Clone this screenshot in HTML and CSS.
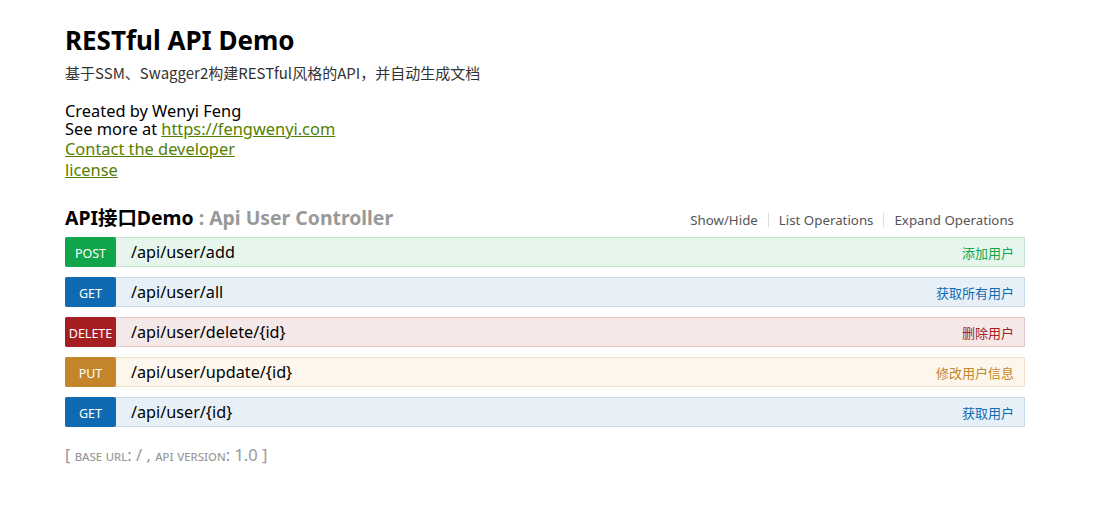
FILE: index.html
```html
<!DOCTYPE html>
<html>
<head>
<meta charset="utf-8">
<link rel="stylesheet" href="styles.css">
</head>
<body>
<div class="wrap">
  <div class="info">
    <div class="info-title">RESTful API Demo</div>
    <div class="info-desc">基于SSM、Swagger2构建RESTful风格的API，并自动生成文档</div>
    <div class="info-by">Created by Wenyi Feng</div>
    <div class="info-more">See more at <a href="#">https://fengwenyi.com</a></div>
    <div class="info-link"><a href="#">Contact the developer</a></div>
    <div class="info-link"><a href="#">license</a></div>
  </div>

  <div class="resource">
    <div class="res-head">
      <h2 class="res-title">API接口Demo<span class="res-sub"> : Api User Controller</span></h2>
      <ul class="options">
        <li>Show/Hide</li>
        <li>List Operations</li>
        <li>Expand Operations</li>
      </ul>
    </div>
    <div class="op post">
      <span class="method">POST</span>
      <span class="path">/api/user/add</span>
      <span class="summary">添加用户</span>
    </div>
    <div class="op get">
      <span class="method">GET</span>
      <span class="path">/api/user/all</span>
      <span class="summary">获取所有用户</span>
    </div>
    <div class="op delete">
      <span class="method">DELETE</span>
      <span class="path">/api/user/delete/{id}</span>
      <span class="summary">删除用户</span>
    </div>
    <div class="op put">
      <span class="method">PUT</span>
      <span class="path">/api/user/update/{id}</span>
      <span class="summary">修改用户信息</span>
    </div>
    <div class="op get">
      <span class="method">GET</span>
      <span class="path">/api/user/{id}</span>
      <span class="summary">获取用户</span>
    </div>
  </div>

  <div class="footer">[ <span class="sc">base url</span>: / , <span class="sc">api version</span>: 1.0 ]</div>
</div>
</body>
</html>
```
FILE: styles.css
```css
* { box-sizing: border-box; }
body {
  margin: 0;
  background: #fff;
  font-family: "Noto Sans", "Noto Sans CJK SC", sans-serif;
  color: #000;
}
.wrap {
  width: 960px;
  margin-left: 65px;
  padding-top: 22px;
}
.info-title {
  font-size: 26px;
  font-weight: bold;
  line-height: 36px;
}
.info-desc {
  font-size: 15px;
  color: #333;
  line-height: 20px;
  margin-top: 5px;
  font-family: "Noto Sans CJK SC", sans-serif;
}
.info-by {
  margin-top: 19px;
  font-size: 16.4px;
  line-height: 18px;
}
.info-more {
  font-size: 16.4px;
  line-height: 18px;
}
.info-link {
  font-size: 16.4px;
  line-height: 21px;
}
a { color: #547f00; text-decoration: underline; }

.resource { margin-top: 23px; }
.res-head {
  display: flex;
  justify-content: space-between;
  align-items: flex-end;
  height: 28px;
  margin-bottom: 6px;
}
.res-title {
  margin: 0;
  font-size: 19.4px;
  font-weight: bold;
  line-height: 26px;
  font-family: "Noto Sans", "Noto Sans CJK SC", sans-serif;
}
.res-sub { color: #999; }
.options {
  list-style: none;
  display: flex;
  margin: 0;
  padding: 0 0 4px 0;
  font-size: 13.3px;
  color: #555;
  line-height: 14px;
}
.options li {
  padding: 0 10px;
  border-right: 1px solid #ddd;
}
.options li:last-child { border-right: none; padding-right: 11px; }

.op {
  display: flex;
  align-items: center;
  height: 30px;
  border: 1px solid;
  margin-bottom: 10px;
}
.method {
  width: 51px;
  align-self: stretch;
  margin: -1px 0 -1px -1px;
  border-radius: 2px;
  color: #fff;
  font-size: 12.5px;
  display: flex;
  align-items: center;
  justify-content: center;
  padding-top: 2px;
}
.path {
  flex: 1;
  padding-left: 15px;
  font-size: 16.2px;
}
.summary {
  font-size: 13px;
  padding-right: 10px;
  font-family: "Noto Sans CJK SC", sans-serif;
}
.post { background: #e7f6ec; border-color: #c3e8d1; }
.post .method { background: #10a54a; }
.post .summary { color: #10a54a; }
.get { background: #e7f0f7; border-color: #c3d9ec; }
.get .method { background: #0f6ab4; }
.get .summary { color: #0f6ab4; }
.delete { background: #f5e8e8; border-color: #e8c6c7; }
.delete .method { background: #a41e22; }
.delete .summary { color: #a41e22; }
.put { background: #fcf6ed; border-color: #f0e0ca; }
.put .method { background: #c5862b; }
.put .summary { color: #c5862b; }

.footer {
  margin-top: 18px;
  color: #999;
  font-size: 16.5px;
  line-height: 20px;
}
.sc { font-variant: small-caps; font-size: 14px; }
```
